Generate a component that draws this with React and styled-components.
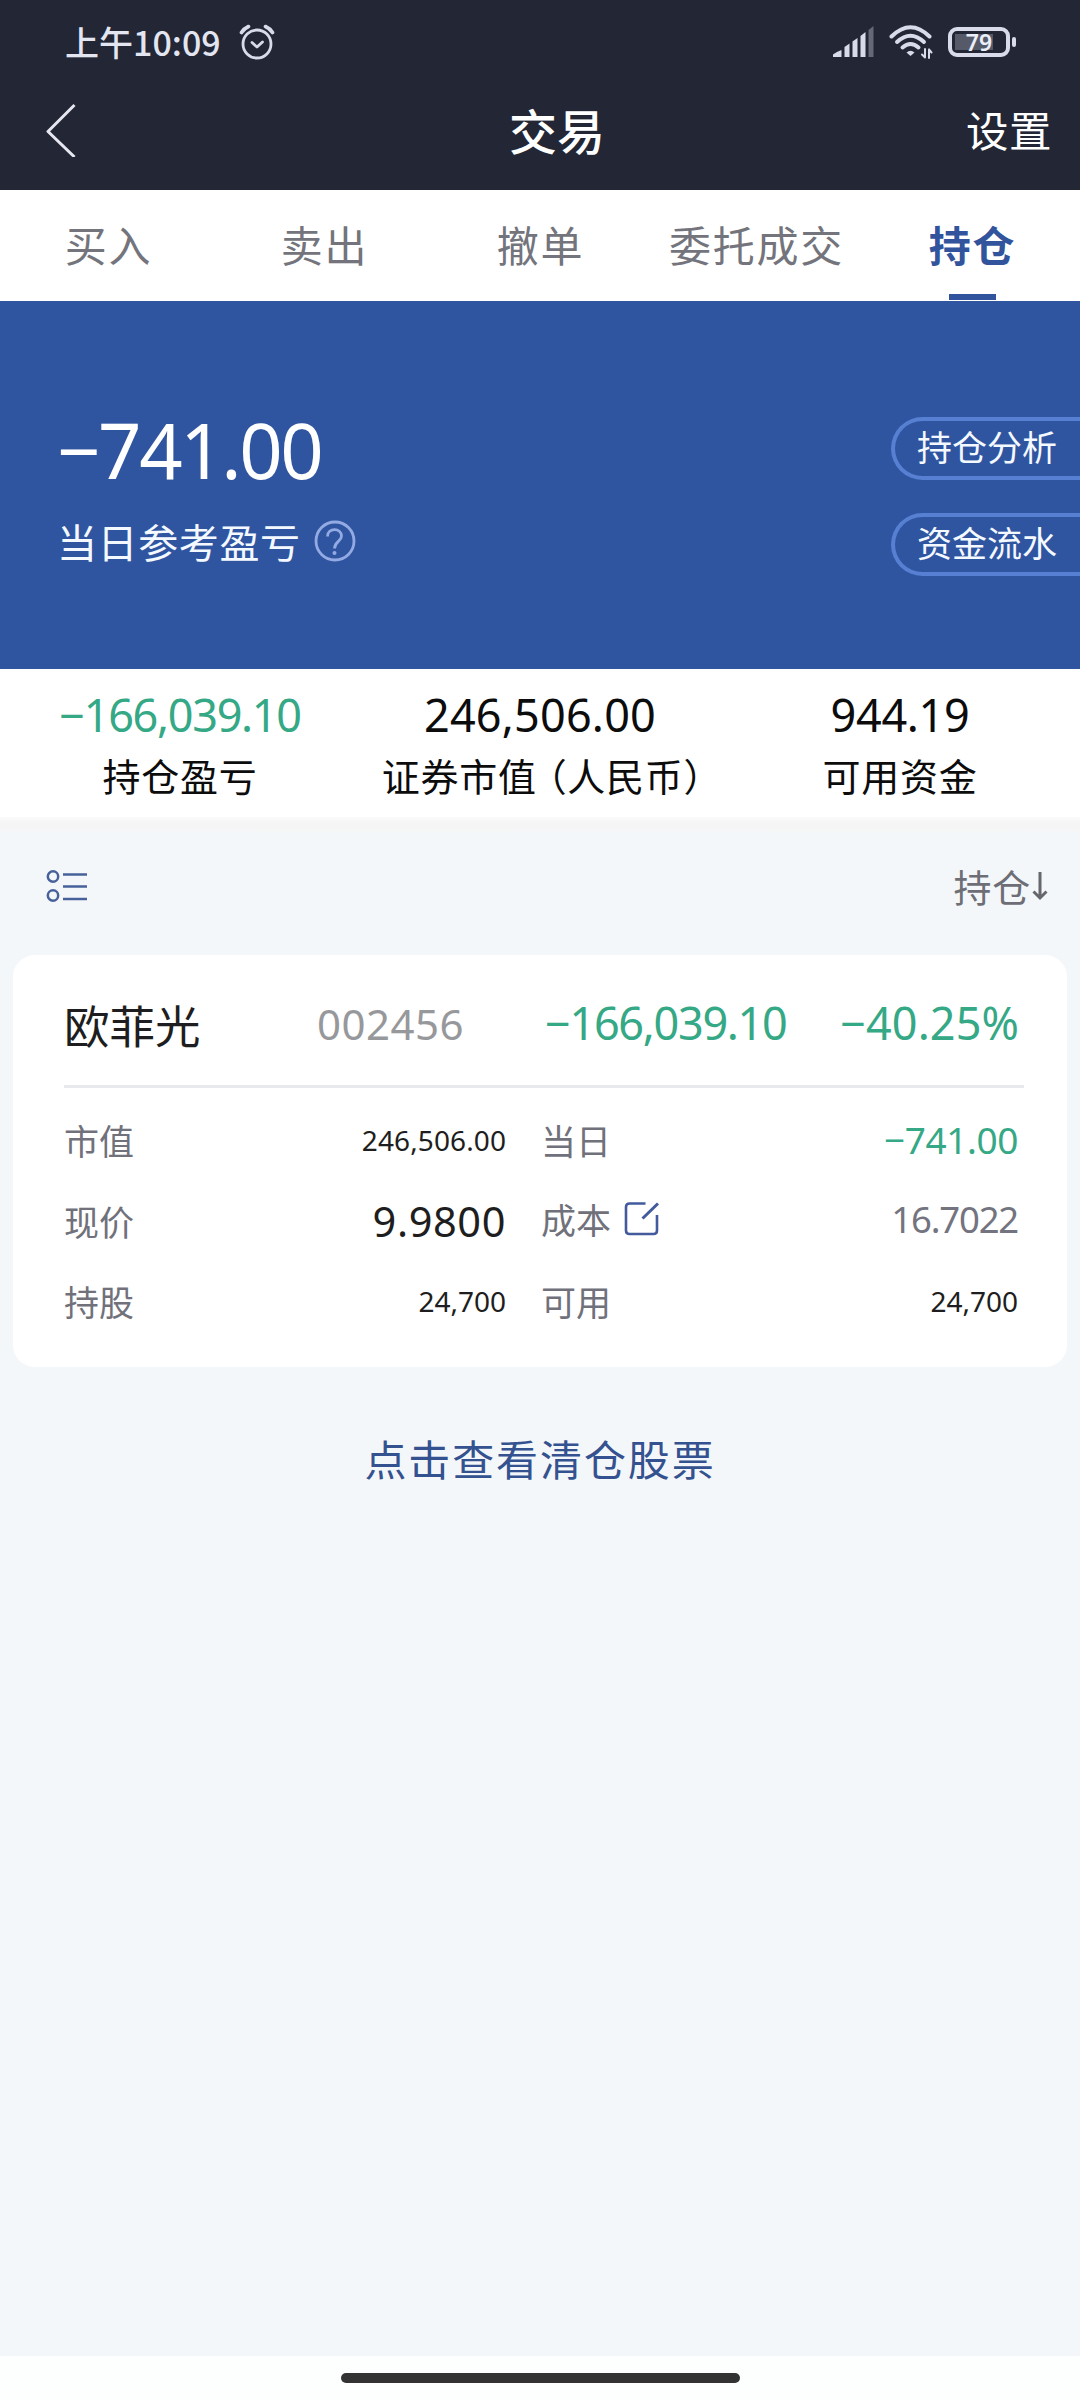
import React from 'react';
import styled, { createGlobalStyle } from 'styled-components';

const TABS = ['买入', '卖出', '撤单', '委托成交', '持仓'];

const App = () => {
  return (
    <>
      <GlobalStyle />
      <Page>
        <StatusBar>
          <Clock>上午10:09</Clock>
          <AlarmIcon />
          <StatusIcons>
            <SignalIcon />
            <WifiIcon />
            <Battery>
              <BatteryBody>
                <BatteryLevel />
                <BatteryText>79</BatteryText>
              </BatteryBody>
              <BatteryTip />
            </Battery>
          </StatusIcons>
        </StatusBar>

        <NavBar>
          <BackIcon />
          <Title>交易</Title>
          <Setting>设置</Setting>
        </NavBar>

        <Tabs>
          {TABS.map((tab) => (
            <Tab key={tab} $active={tab === '持仓'}>
              {tab}
            </Tab>
          ))}
        </Tabs>

        <Hero>
          <HeroLeft>
            <Num $size={76} $gap={-2.4} $color="#fff">−741.00</Num>
            <HeroLabel>
              当日参考盈亏
              <HelpIcon />
            </HeroLabel>
          </HeroLeft>
          <Pills>
            <Pill>持仓分析</Pill>
            <Pill>资金流水</Pill>
          </Pills>
        </Hero>

        <Summary>
          <SummaryItem>
            <Num $size={45} $gap={-1.3} $color="#35a885">−166,039.10</Num>
            <SummaryLabel>持仓盈亏</SummaryLabel>
          </SummaryItem>
          <SummaryItem>
            <Num $size={45} $gap={0.2} $color="#0c0c0c">246,506.00</Num>
            <SummaryLabel>
              证券市值<Currency>（人民币）</Currency>
            </SummaryLabel>
          </SummaryItem>
          <SummaryItem>
            <Num $size={45} $gap={-0.3} $color="#0c0c0c">944.19</Num>
            <SummaryLabel>可用资金</SummaryLabel>
          </SummaryItem>
        </Summary>
        <Divider />

        <ListHeader>
          <ListIcon />
          <Sort>
            持仓
            <ArrowDownIcon />
          </Sort>
        </ListHeader>

        <Card>
          <CardHeader>
            <StockName>欧菲光</StockName>
            <Num $size={42} $gap={0.5} $color="#97989b">002456</Num>
            <Num $size={45} $gap={-1.3} $color="#35a885" $up>−166,039.10</Num>
            <Num $size={45} $gap={0.1} $color="#35a885" $up $right>−40.25%</Num>
          </CardHeader>
          <CardGrid>
            <Cell>
              <CellLabel>市值</CellLabel>
              <Num $size={28} $gap={0.1}>246,506.00</Num>
            </Cell>
            <Cell>
              <CellLabel>当日</CellLabel>
              <Num $size={37} $gap={-0.4} $color="#35a885">−741.00</Num>
            </Cell>
            <Cell>
              <CellLabel>现价</CellLabel>
              <Num $size={41.5} $gap={0.6}>9.9800</Num>
            </Cell>
            <Cell $lift>
              <CellLabel>
                成本
                <EditIcon />
              </CellLabel>
              <Num $size={36.5} $gap={-1.2} $color="#737480">16.7022</Num>
            </Cell>
            <Cell>
              <CellLabel>持股</CellLabel>
              <Num $size={28}>24,700</Num>
            </Cell>
            <Cell>
              <CellLabel>可用</CellLabel>
              <Num $size={28}>24,700</Num>
            </Cell>
          </CardGrid>
        </Card>

        <ClearedLink>点击查看清仓股票</ClearedLink>

        <HomeArea>
          <HomeBar />
        </HomeArea>
      </Page>
    </>
  );
};

const AlarmIcon = () => (
  <svg width="36" height="36" viewBox="0 0 36 36" fill="none" stroke="#d9dbea" strokeLinecap="round">
    <circle cx="18" cy="20" r="14" strokeWidth="2.8" />
    <path d="M2.5 8.5Q5 4.5 9.5 2.500M33.500 8.500Q31 4.500 26.500 2.500" strokeWidth="3.600" />
    <path d="M13 18.500L18 23L23.500 18" strokeWidth="2.800" strokeLinejoin="round" />
  </svg>
);

const SignalIcon = () => (
  <svg width="41" height="32" viewBox="0 0 41 32" fill="#d9dbea">
    <path d="M0 31V28.500Q3 26 8.500 24V31Z" />
    <path d="M11.500 31V21L16.500 17.500V31Z" />
    <path d="M19.500 31V15.500L24.500 12V31Z" />
    <path d="M27.500 31V10L32.500 6V31Z" />
    <path d="M35.500 31V4L40.500 0V31Z" fill="#656877" />
  </svg>
);

const WifiIcon = () => (
  <svg width="44" height="36" viewBox="0 0 44 36" fill="none" stroke="#d9dbea" strokeLinecap="round">
    <path d="M2.500 12.500Q21.500 -6 40.500 12.500" strokeWidth="4" />
    <path d="M8 18Q21.500 5.500 35 18" strokeWidth="4" />
    <path d="M13.500 23.500Q21.500 16.500 29.500 23.500" strokeWidth="4" />
    <path d="M17.500 28.500Q21.500 25 25.500 28.500L21.500 32Z" fill="#d9dbea" stroke="none" />
    <path d="M36 25V33.500M36 33.500L33 30.500M40 34V25.500M40 25.500L42.500 28.500" strokeWidth="2" />
  </svg>
);

const BackIcon = () => (
  <svg width="32" height="56" viewBox="0 0 32 56" fill="none" stroke="#e6e7f0" strokeWidth="3">
    <path d="M29.500 4L3 30.500L29.500 56" strokeLinejoin="round" />
  </svg>
);

const HelpIcon = () => (
  <svg width="42" height="42" viewBox="0 0 42 42" fill="none" stroke="#94aae3" strokeWidth="2.800">
    <circle cx="21" cy="21" r="19" />
    <path d="M13.500 16.500C13.500 7.500 27.500 7.500 27.500 16C27.500 21.500 20.500 21.500 20.500 28.500" />
    <circle cx="20.500" cy="33" r="2" fill="#94aae3" stroke="none" />
  </svg>
);

const ListIcon = () => (
  <svg width="42" height="34" viewBox="0 0 42 34" fill="none" stroke="#47619b" strokeWidth="2.500">
    <circle cx="7" cy="7.500" r="5.200" />
    <circle cx="7" cy="26.500" r="5.200" />
    <path d="M17 5.500H41M17 17.500H41M17 30H41" />
  </svg>
);

const ArrowDownIcon = () => (
  <svg width="16" height="30" viewBox="0 0 16 30" fill="none" stroke="#66676d" strokeWidth="3">
    <path d="M8 1V27M1.500 20.500L8 27L14.500 20.500" />
  </svg>
);

const EditIcon = () => (
  <svg width="36" height="36" viewBox="0 0 36 36" fill="none" stroke="#435a9c" strokeWidth="2.600">
    <path d="M21.500 2.500H5.500Q2 2.500 2 6V29.500Q2 33 5.500 33H29.500Q33 33 33 29.500V14" />
    <path d="M18.500 17.500L34 2.500" strokeWidth="3" />
  </svg>
);

const GlobalStyle = createGlobalStyle`
  body {
    margin: 0;
    background-color: #f4f7fa;
    font-family: "Noto Sans CJK SC", "Noto Sans", sans-serif;
  }
  * {
    box-sizing: border-box;
  }
  svg {
    display: block;
    flex-shrink: 0;
  }
`;

const Page = styled.div`
  width: 1080px;
  height: 2400px;
  display: flex;
  flex-direction: column;
  background-color: #f4f7fa;
  overflow: hidden;
`;

const Num = styled.span`
  font-family: "Noto Sans", sans-serif;
  font-size: ${({ $size }) => $size}px;
  line-height: ${({ $size }) => ($size > 50 ? 80 : 50)}px;
  letter-spacing: ${({ $gap }) => $gap || 0}px;
  color: ${({ $color }) => $color || '#1e1e20'};
  text-align: ${({ $right }) => ($right ? 'right' : 'left')};
  padding-bottom: ${({ $up }) => ($up ? 3 : 0)}px;
  white-space: nowrap;
`;

const StatusBar = styled.div`
  height: 84px;
  padding: 0 64px 0 65px;
  display: flex;
  align-items: center;
  background-color: #222635;
`;

const Clock = styled.span`
  margin-right: 18px;
  font-size: 34px;
  font-weight: 500;
  line-height: 40px;
  color: #e3e5f1;
`;

const StatusIcons = styled.div`
  margin-left: auto;
  display: flex;
  align-items: center;
  gap: 15px;
`;

const Battery = styled.div`
  display: flex;
  align-items: center;
  gap: 2px;
`;

const BatteryBody = styled.div`
  width: 62px;
  height: 30px;
  padding: 3px;
  display: grid;
  align-items: center;
  border: 4px solid #d9dbea;
  border-radius: 9px;
`;

const BatteryLevel = styled.div`
  grid-area: 1 / 1;
  width: 38px;
  height: 16px;
  background-color: #565a68;
`;

const BatteryText = styled.span`
  grid-area: 1 / 1;
  text-align: center;
  font-family: "Noto Sans", sans-serif;
  font-size: 23px;
  font-weight: 600;
  line-height: 16px;
  color: #eceefa;
`;

const BatteryTip = styled.div`
  width: 4px;
  height: 10px;
  border-radius: 2px;
  background-color: #d9dbea;
`;

const NavBar = styled.div`
  height: 106px;
  padding: 0 28px 16px 45px;
  display: grid;
  grid-template-columns: 1fr auto 1fr;
  align-items: center;
  background-color: #222635;
  color: #fff;
`;

const Title = styled.h1`
  margin: 0 -17px 0 0;
  font-size: 48px;
  font-weight: 500;
  line-height: 60px;
`;

const Setting = styled.span`
  justify-self: end;
  font-size: 42.5px;
  line-height: 60px;
  letter-spacing: 0.5px;
`;

const Tabs = styled.div`
  height: 111px;
  display: grid;
  grid-template-columns: repeat(5, 1fr);
  background-color: #fff;
`;

const Tab = styled.div`
  display: flex;
  flex-direction: column;
  align-items: center;
  padding: 4px 0 0 1px;
  font-size: 42px;
  font-weight: ${({ $active }) => ($active ? 700 : 400)};
  line-height: 100px;
  letter-spacing: 1.800px;
  color: ${({ $active }) => ($active ? '#31549c' : '#73747c')};

  &::after {
    content: '';
    width: 47px;
    height: 6px;
    background-color: ${({ $active }) => ($active ? '#31549c' : 'transparent')};
  }
`;

const Hero = styled.div`
  height: 368px;
  display: flex;
  justify-content: space-between;
  background-color: #2f55a1;
`;

const HeroLeft = styled.div`
  padding: 109px 0 0 57px;
  display: flex;
  flex-direction: column;
`;

const HeroLabel = styled.div`
  margin-top: 26px;
  display: flex;
  align-items: center;
  gap: 13px;
  font-size: 40px;
  line-height: 50px;
  letter-spacing: 0.600px;
  color: #f4f9ff;
`;

const Pills = styled.div`
  padding-top: 116px;
  display: flex;
  flex-direction: column;
  gap: 33px;
`;

const Pill = styled.div`
  width: 189px;
  height: 63px;
  padding-left: 22px;
  border: 4px solid #5780d3;
  border-right: none;
  border-radius: 32px 0 0 32px;
  font-size: 35px;
  line-height: 50px;
  color: #f4f9ff;
`;

const Summary = styled.div`
  height: 148px;
  padding-top: 21px;
  display: grid;
  grid-template-columns: repeat(3, 1fr);
  background-color: #fff;
`;

const SummaryItem = styled.div`
  display: flex;
  flex-direction: column;
  align-items: center;
`;

const SummaryLabel = styled.span`
  margin-top: 15px;
  font-size: 38px;
  line-height: 40px;
  letter-spacing: 0.700px;
  color: #0c0c0c;
  white-space: nowrap;
`;

const Currency = styled.span`
  margin: 0 -5px 0 11px;
  font-feature-settings: 'halt';
`;

const Divider = styled.div`
  height: 16px;
  background: linear-gradient(#fafafa, #f5f5f6 40%, #f5f6f7);
`;

const ListHeader = styled.div`
  height: 122px;
  padding: 0 32px 16px 46px;
  display: flex;
  align-items: center;
  justify-content: space-between;
`;

const Sort = styled.div`
  display: flex;
  align-items: center;
  gap: 1px;
  font-size: 38px;
  line-height: 40px;
  letter-spacing: 0.700px;
  color: #6d6e76;
`;

const Card = styled.div`
  height: 412px;
  margin: 0 13px;
  padding: 0 43px 0 51px;
  border-radius: 22px;
  background-color: #fff;
`;

const CardHeader = styled.div`
  height: 133px;
  padding: 8px 5px 0 0;
  display: grid;
  grid-template-columns: 253px 228px auto 1fr;
  align-items: center;
  border-bottom: 3px solid #e8e9ec;
`;

const StockName = styled.span`
  font-size: 45.500px;
  line-height: 60px;
  color: #1e1e20;
`;

const CardGrid = styled.div`
  margin-top: 12px;
  display: grid;
  grid-template-columns: 442px 477px;
  grid-auto-rows: 80.500px;
  column-gap: 35px;
`;

const Cell = styled.div`
  display: flex;
  align-items: center;
  justify-content: space-between;
  padding-bottom: ${({ $lift }) => ($lift ? 4 : 0)}px;
`;

const CellLabel = styled.span`
  display: flex;
  align-items: center;
  gap: 13px;
  font-size: 35px;
  line-height: 50px;
  color: #70717a;
`;

const ClearedLink = styled.div`
  margin-top: 61px;
  text-align: center;
  font-size: 42px;
  line-height: 60px;
  letter-spacing: 1.900px;
  color: #34528f;
`;

const HomeArea = styled.div`
  height: 44px;
  margin-top: auto;
  padding-top: 17px;
  background-color: #fdfefe;
`;

const HomeBar = styled.div`
  width: 399px;
  height: 10px;
  margin: 0 auto;
  border-radius: 5px;
  background-color: #333;
`;

export default App;
